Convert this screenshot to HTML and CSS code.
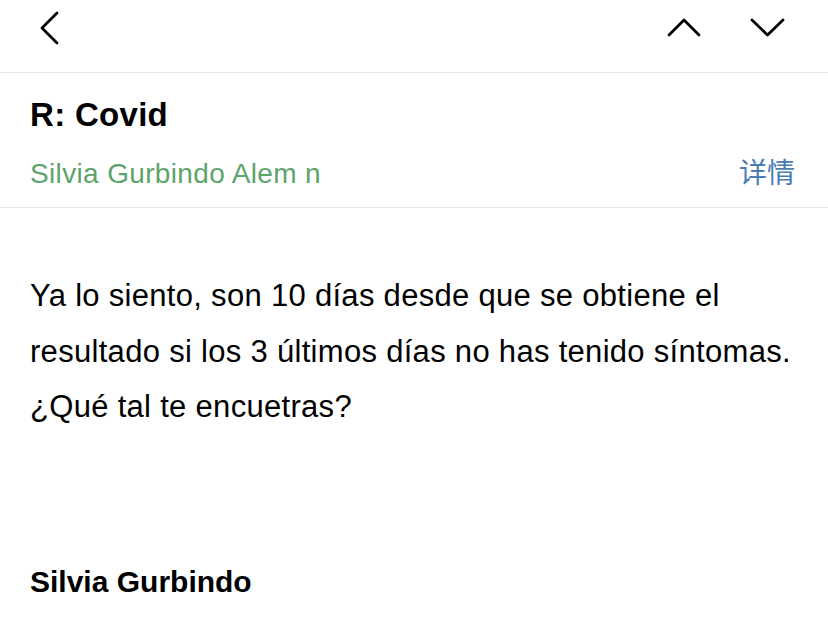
FILE: index.html
```html
<!DOCTYPE html>
<html lang="es">
<head>
<meta charset="utf-8">
<title>R: Covid</title>
<link rel="stylesheet" href="styles.css">
</head>
<body>
<div class="app">
  <header class="topbar">
    <svg class="icon-back" width="24" height="36" viewBox="0 0 24 36" aria-label="Atrás">
      <path d="M19 3 L4 18 L19 33" fill="none" stroke="#000" stroke-width="2.8" stroke-linecap="round" stroke-linejoin="round"/>
    </svg>
    <div class="nav-arrows">
      <svg width="40" height="24" viewBox="0 0 40 24" aria-label="Anterior">
        <path d="M5 19 L20 4 L35 19" fill="none" stroke="#000" stroke-width="2.8" stroke-linecap="round" stroke-linejoin="round"/>
      </svg>
      <svg width="40" height="24" viewBox="0 0 40 24" aria-label="Siguiente">
        <path d="M4 4 L19.5 19 L35 4" fill="none" stroke="#000" stroke-width="2.8" stroke-linecap="round" stroke-linejoin="round"/>
      </svg>
    </div>
  </header>

  <section class="mail-head">
    <h1 class="subject">R: Covid</h1>
    <div class="sender-row">
      <span class="sender">Silvia Gurbindo Alem n</span>
      <span class="details">详情</span>
    </div>
  </section>

  <main class="mail-body">
    <p class="message">Ya lo siento, son 10 días desde que se obtiene el resultado si los 3 últimos días no has tenido síntomas. ¿Qué tal te encuetras?</p>
    <p class="signature">Silvia Gurbindo</p>
  </main>
</div>
</body>
</html>
```

FILE: styles.css
```css
html, body {
  margin: 0;
  padding: 0;
  background: #ffffff;
}

body {
  font-family: "Liberation Sans", Arial, Helvetica, sans-serif;
  color: #000;
}

.app {
  width: 828px;
  height: 641px;
  overflow: hidden;
}

.topbar {
  box-sizing: border-box;
  height: 73px;
  border-bottom: 1px solid #e6e6e6;
  display: flex;
  justify-content: space-between;
  align-items: flex-start;
  padding: 10px 40px 0 38px;
}

.icon-back {
  display: block;
}

.nav-arrows {
  display: flex;
  gap: 44px;
  padding-top: 6px;
}

.nav-arrows svg {
  display: block;
}

.mail-head {
  padding: 21px 33px 18px 30px;
  border-bottom: 1px solid #e6e6e6;
}

.subject {
  margin: 0;
  font-size: 33px;
  line-height: 41px;
  font-weight: 700;
  letter-spacing: 0.3px;
}

.sender-row {
  margin-top: 18px;
  display: flex;
  justify-content: space-between;
  align-items: baseline;
  height: 36px;
}

.sender {
  font-size: 28px;
  line-height: 36px;
  color: #5ea36c;
  letter-spacing: 0.35px;
}

.details {
  font-family: "Noto Sans CJK SC", "Liberation Sans", sans-serif;
  font-size: 28px;
  line-height: 36px;
  color: #4a7db3;
}

.mail-body {
  padding: 60px 20px 0 30px;
}

.message {
  margin: 0;
  font-size: 31px;
  line-height: 55.5px;
  letter-spacing: 0.3px;
}

.signature {
  margin: 127px 0 0 0;
  font-size: 30px;
  line-height: 40px;
  font-weight: 700;
  letter-spacing: 0px;
}
```
